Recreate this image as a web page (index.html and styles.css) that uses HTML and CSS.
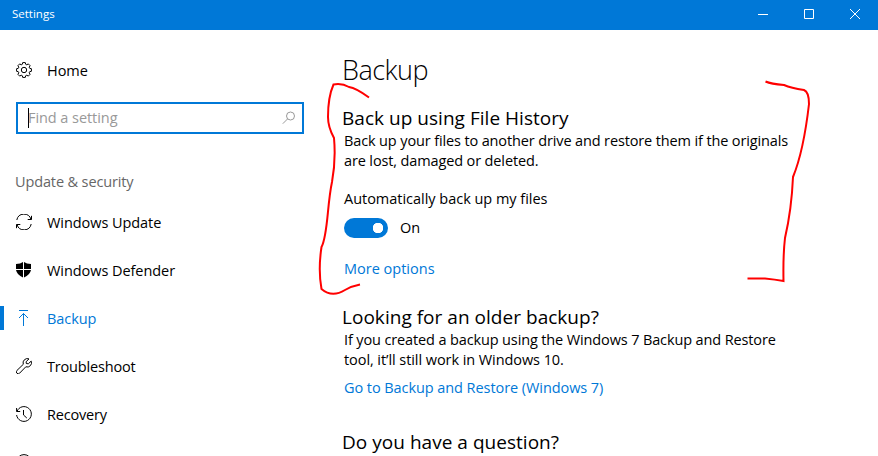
FILE: index.html
```html
<!DOCTYPE html>
<html lang="en">
<head>
<meta charset="utf-8">
<title>Settings</title>
<link rel="stylesheet" href="styles.css">
</head>
<body>
<div class="window">
  <header class="titlebar">
    <span>Settings</span>
    <div class="controls">
      <svg width="46" height="30" viewBox="0 0 46 30"><path d="M18 14.500h10"/></svg>
      <svg width="46" height="30" viewBox="0 0 46 30"><path d="M18.500 9.500h9v9h-9z"/></svg>
      <svg width="46" height="30" viewBox="0 0 46 30"><path d="M18 9l10 10M28 9l-10 10"/></svg>
    </div>
  </header>
  <div class="body">
    <aside class="sidebar">
      <a class="home">
        <svg class="icon" viewBox="0 0 16 16"><path d="M6.700 .6h2.600l.4 1.700 1.100.5 1.500-.9 1.800 1.800-.9 1.500.5 1.100 1.700.4v2.600l-1.700.4-.5 1.100.9 1.500-1.800 1.800-1.500-.9-1.100.5-.4 1.700H6.700l-.4-1.700-1.100-.5-1.500.9-1.800-1.800.9-1.500-.5-1.100-1.700-.4V6.700l1.700-.4.5-1.100-.9-1.500 1.800-1.800 1.500.9 1.100-.5z"/><circle cx="8" cy="8" r="2.700"/></svg>
        <span>Home</span>
      </a>
      <div class="search"><i class="caret"></i><span>Find a setting</span>
        <svg class="lens" viewBox="0 0 14 14"><circle cx="8.500" cy="5" r="4"/><path d="M5.600 7.900L.8 12.700"/></svg>
      </div>
      <div class="group">Update &amp; security</div>
      <nav>
        <a class="item"><svg class="icon" viewBox="0 0 16 16"><path d="M.8 6A7.300 7.300 0 0 1 15 5.500M15.500 1.800V5.500H11.700M15.200 10A7.300 7.300 0 0 1 1 10.500M.5 14.200V10.500H4.300"/></svg><span>Windows Update</span></a>
        <a class="item"><svg class="icon solid" viewBox="0 0 16 16"><path d="M7 0v7H0V2Q4.500 2 7 0zM8 0Q10.500 2 15 2v5H8zM0 8h7v7.500Q1 13 0 8zM8 8h7q-1 5-7 7.500z"/></svg><span>Windows Defender</span></a>
        <a class="item active"><svg class="icon" viewBox="0 0 16 16"><path d="M3 .5h9M7.500 16V3.500M3 8l4.500-4.500L12 8"/></svg><span>Backup</span></a>
        <a class="item tight"><svg class="icon" viewBox="0 0 16 16"><path d="M13 .9A4.300 4.300 0 0 0 7.300 6.300L.9 12.500a1.900 1.900 0 0 0 2.700 2.700L9.800 8.800A4.300 4.300 0 0 0 15.200 3.100L12.300 5.800 10.300 5.500 10.100 3.700z"/></svg><span>Troubleshoot</span></a>
        <a class="item tight"><svg class="icon" viewBox="0 0 16 16"><path d="M.6 2v3.500h3.600M1 5.400A7.400 7.400 0 1 1 .6 9M7.500 4v5l3.300 3"/></svg><span>Recovery</span></a>
        <a class="item"><svg class="icon" viewBox="0 0 16 16"><circle cx="8" cy="8" r="7.400"/></svg></a>
      </nav>
    </aside>
    <main class="content">
      <h1>Backup</h1>
      <section class="history">
        <h2>Back up using File History</h2>
        <p class="text">Back up your files to another drive and restore them if the originals<br>are lost, damaged or deleted.</p>
        <p class="label">Automatically back up my files</p>
        <div class="switch"><span class="toggle"></span><span>On</span></div>
        <a class="link">More options</a>
        <svg class="ink" width="500" height="220" viewBox="315 78 500 220"><path d="M369 97.500Q356 88 349 87Q342 83 333.500 84.500Q328 97 328 117Q328 127 334 138Q336 160 332 182C327 205 328 235 321.500 247Q318 270 321.500 289Q332 298 345 290Q352 286 360 284.500M765.500 81.500Q771 84 784 85Q791 88 804 90Q809 92 809 104C806 130 802 155 793 177C792 200 788 225 785 238Q783 255 783.500 281Q775 279.500 765 278.500H747.500"/></svg>
      </section>
      <section class="older">
        <h2>Looking for an older backup?</h2>
        <p class="text">If you created a backup using the Windows 7 Backup and Restore<br><span class="looser">tool, it’ll still work in Windows 10.</span></p>
        <a class="link looser">Go to Backup and Restore (Windows 7)</a>
      </section>
      <section class="question"><h2>Do you have a question?</h2></section>
    </main>
  </div>
</div>
</body>
</html>
```

FILE: styles.css
```css
* { box-sizing: border-box; }
body { margin: 0; font: 14.5px/20px "Open Sans", sans-serif; color: #000; background: #fff; }
.window { width: 878px; height: 456px; overflow: hidden; }
svg { fill: none; stroke: currentColor; stroke-width: 1; flex: none; }
.titlebar { display: flex; justify-content: space-between; height: 30px; padding-left: 12px; background: #0078d7; color: #fff; font-size: 11.5px; line-height: 28px; }
.controls { display: flex; }
.body { display: flex; height: 426px; }
.sidebar { width: 342px; flex: none; letter-spacing: -0.06px; }
.home, .item { display: flex; align-items: center; gap: 15px; height: 48px; padding-left: 16px; }
.home { margin: 16px 0 8px; }
.home span, .item span { padding-top: 2px; }
.icon { width: 16px; height: 16px; }
.solid { fill: currentColor; stroke: none; }
.search { display: flex; align-items: center; width: 288px; height: 32px; margin-left: 16px; padding-left: 10px; padding-right: 6px; border: 2px solid #0078d7; color: #999; }
.caret { width: 1px; height: 20px; margin-right: -1px; background: #000; }
.lens { width: 14px; height: 14px; margin-left: auto; }
.group { margin: 38px 0 6px 15px; color: #666; letter-spacing: -0.13px; }
.tight { letter-spacing: -0.18px; }
.active { color: #0078d7; }
.active::before { content: ""; width: 4px; height: 24px; margin-left: -16px; margin-right: -3px; background: #0078d7; }
h1, h2, p { margin: 0; font-weight: 400; }
h1 { font-size: 27px; line-height: 36px; font-weight: 330; letter-spacing: -0.5px; margin-top: 22px; }
h2 { font-size: 19px; line-height: 26px; letter-spacing: 0.03px; }
.content { flex: 1; }
.history { position: relative; margin-top: 17px; }
p, .link, .switch { margin-left: 2px; }
.text { letter-spacing: -0.13px; }
.looser { letter-spacing: -0.07px; }
.label { margin-top: 18px; letter-spacing: -0.02px; }
.switch { display: flex; align-items: center; gap: 12px; margin-top: 9px; }
.toggle { width: 44px; height: 20px; border-radius: 10px; background: radial-gradient(circle at 34px 10px, #fff 5px, #0078d7 5.500px); }
.link { display: block; color: #0078d7; margin-top: 21px; }
.ink { position: absolute; left: -27px; top: -27px; stroke: #f00; stroke-width: 2; }
.older { margin-top: 25px; }
.older .link { margin-top: 8px; }
.question { margin-top: 31px; }
```
